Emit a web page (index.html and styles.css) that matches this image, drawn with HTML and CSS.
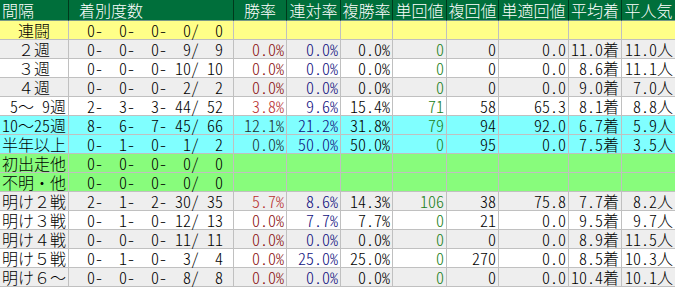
FILE: index.html
```html
<!DOCTYPE html>
<html lang="ja">
<head>
<meta charset="utf-8">
<link rel="stylesheet" href="styles.css">
</head>
<body>
<div class="tbl">
  <div class="row head">
    <div class="c lab-h">間隔</div><div class="c cnt-h"><span class="hw"> </span>着別度数</div><div class="c">勝率</div><div class="c">連対率</div><div class="c">複勝率</div><div class="c">単回値</div><div class="c">複回値</div><div class="c">単適回値</div><div class="c">平均着</div><div class="c">平人気</div>
  </div>
  <div class="row yellow">
    <div class="c lab">連闘</div><div class="c cnt">  0-  0-  0-  0/  0</div><div class="c"></div><div class="c"></div><div class="c"></div><div class="c"></div><div class="c"></div><div class="c"></div><div class="c"></div><div class="c"></div>
  </div>
  <div class="row gray">
    <div class="c lab">２週</div><div class="c cnt">  0-  0-  0-  9/  9</div><div class="c n r0">0.0%</div><div class="c n b">0.0%</div><div class="c n">0.0%</div><div class="c n g">0</div><div class="c n">0</div><div class="c n">0.0</div><div class="c n">11.0着</div><div class="c n">11.0人</div>
  </div>
  <div class="row white">
    <div class="c lab">３週</div><div class="c cnt">  0-  0-  0- 10/ 10</div><div class="c n r0">0.0%</div><div class="c n b">0.0%</div><div class="c n">0.0%</div><div class="c n g">0</div><div class="c n">0</div><div class="c n">0.0</div><div class="c n">8.6着</div><div class="c n">11.1人</div>
  </div>
  <div class="row gray">
    <div class="c lab">４週</div><div class="c cnt">  0-  0-  0-  2/  2</div><div class="c n r0">0.0%</div><div class="c n b">0.0%</div><div class="c n">0.0%</div><div class="c n g">0</div><div class="c n">0</div><div class="c n">0.0</div><div class="c n">9.0着</div><div class="c n">7.0人</div>
  </div>
  <div class="row white">
    <div class="c lab"><span class="hw"> 5</span>〜<span class="hw"> 9</span>週</div><div class="c cnt">  2-  3-  3- 44/ 52</div><div class="c n r1">3.8%</div><div class="c n b">9.6%</div><div class="c n">15.4%</div><div class="c n g">71</div><div class="c n">58</div><div class="c n">65.3</div><div class="c n">8.1着</div><div class="c n">8.8人</div>
  </div>
  <div class="row cyan">
    <div class="c lab"><span class="hw">10</span>〜<span class="hw">25</span>週</div><div class="c cnt">  8-  6-  7- 45/ 66</div><div class="c n r2">12.1%</div><div class="c n b">21.2%</div><div class="c n">31.8%</div><div class="c n g">79</div><div class="c n">94</div><div class="c n">92.0</div><div class="c n">6.7着</div><div class="c n">5.9人</div>
  </div>
  <div class="row cyan">
    <div class="c lab">半年以上</div><div class="c cnt">  0-  1-  0-  1/  2</div><div class="c n r2">0.0%</div><div class="c n b">50.0%</div><div class="c n">50.0%</div><div class="c n g">0</div><div class="c n">95</div><div class="c n">0.0</div><div class="c n">7.5着</div><div class="c n">3.5人</div>
  </div>
  <div class="row green">
    <div class="c lab">初出走他</div><div class="c cnt">  0-  0-  0-  0/  0</div><div class="c"></div><div class="c"></div><div class="c"></div><div class="c"></div><div class="c"></div><div class="c"></div><div class="c"></div><div class="c"></div>
  </div>
  <div class="row green">
    <div class="c lab">不明・他</div><div class="c cnt">  0-  0-  0-  0/  0</div><div class="c"></div><div class="c"></div><div class="c"></div><div class="c"></div><div class="c"></div><div class="c"></div><div class="c"></div><div class="c"></div>
  </div>
  <div class="row gray">
    <div class="c lab">明け２戦</div><div class="c cnt">  2-  1-  2- 30/ 35</div><div class="c n r1">5.7%</div><div class="c n b">8.6%</div><div class="c n">14.3%</div><div class="c n g">106</div><div class="c n">38</div><div class="c n">75.8</div><div class="c n">7.7着</div><div class="c n">8.2人</div>
  </div>
  <div class="row white">
    <div class="c lab">明け３戦</div><div class="c cnt">  0-  1-  0- 12/ 13</div><div class="c n r0">0.0%</div><div class="c n b">7.7%</div><div class="c n">7.7%</div><div class="c n g">0</div><div class="c n">21</div><div class="c n">0.0</div><div class="c n">9.5着</div><div class="c n">9.7人</div>
  </div>
  <div class="row gray">
    <div class="c lab">明け４戦</div><div class="c cnt">  0-  0-  0- 11/ 11</div><div class="c n r0">0.0%</div><div class="c n b">0.0%</div><div class="c n">0.0%</div><div class="c n g">0</div><div class="c n">0</div><div class="c n">0.0</div><div class="c n">8.9着</div><div class="c n">11.5人</div>
  </div>
  <div class="row white">
    <div class="c lab">明け５戦</div><div class="c cnt">  0-  1-  0-  3/  4</div><div class="c n r0">0.0%</div><div class="c n b">25.0%</div><div class="c n">25.0%</div><div class="c n g">0</div><div class="c n">270</div><div class="c n">0.0</div><div class="c n">8.5着</div><div class="c n">10.3人</div>
  </div>
  <div class="row gray">
    <div class="c lab">明け６〜</div><div class="c cnt">  0-  0-  0-  8/  8</div><div class="c n r0">0.0%</div><div class="c n b">0.0%</div><div class="c n">0.0%</div><div class="c n g">0</div><div class="c n">0</div><div class="c n">0.0</div><div class="c n">10.4着</div><div class="c n">10.1人</div>
  </div>
</div>
</body>
</html>
```

FILE: styles.css
```css
html, body {
  margin: 0;
  padding: 0;
  background: #ffffff;
}

.tbl {
  width: 675px;
  font-family: "Noto Sans CJK JP", sans-serif;
  font-size: 16px;
  font-weight: 300;
  color: #000000;
}

.row {
  display: grid;
  grid-template-columns: 69px 165px 53px 54px 52px 54px 52px 70px 53px 53px;
  height: 19px;
}

.c {
  box-sizing: border-box;
  border-right: 1px solid #c0c0c0;
  border-bottom: 1px solid #c0c0c0;
  height: 19px;
  line-height: 18px;
  white-space: pre;
  text-align: center;
}

.row .c:last-child {
  border-right: none;
}

.head {
  height: 21px;
  background: #006f3b;
  color: #ffffff;
}

.head .c {
  height: 21px;
  line-height: 20px;
  border-right: 1px solid #00391c;
  border-bottom: 1px solid #7a9a88;
}

.head .lab-h {
  text-align: left;
  padding-left: 2px;
}

.head .cnt-h {
  text-align: left;
  padding-left: 2px;
}

.yellow { background: #ffff88; }
.gray { background: #eeeeee; }
.white { background: #ffffff; }
.cyan { background: #80ffff; }
.green { background: #88fc7c; }

.lab {
  text-align: center;
}

.hw,
.cnt,
.n {
  font-feature-settings: "hwid" 1;
}

.cnt {
  text-align: left;
  padding-left: 2px;
}

.n {
  text-align: right;
  padding-right: 2px;
}

.r0 { color: #8a1010; }
.r1 { color: #b83030; }
.r2 { color: #203030; }
.b { color: #101080; }
.g { color: #208020; }
```
